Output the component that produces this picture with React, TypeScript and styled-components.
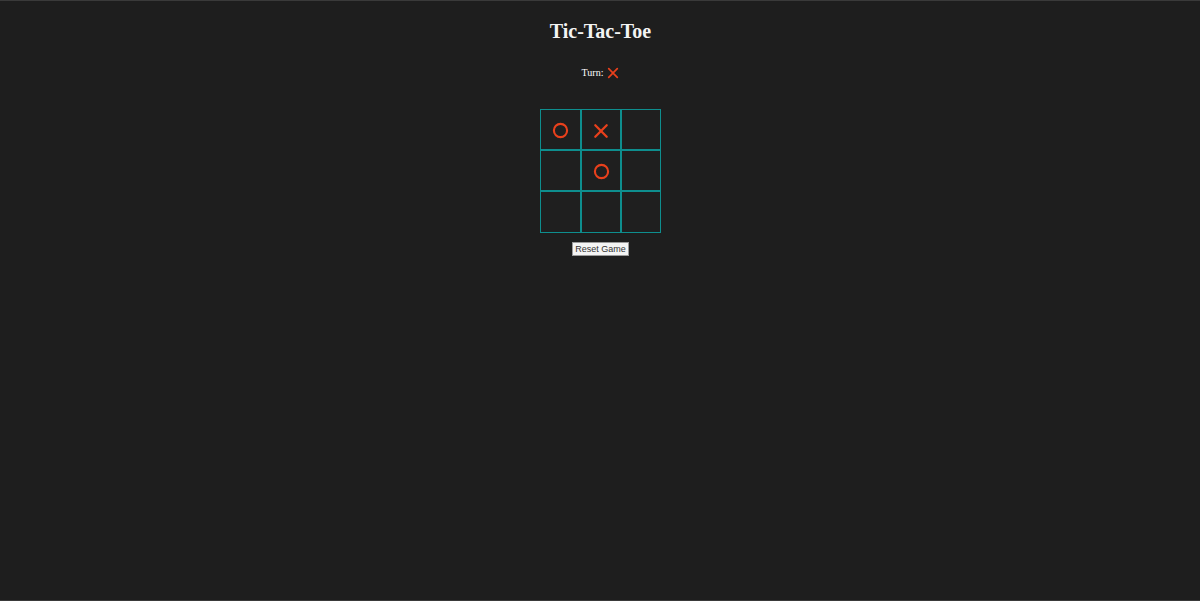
import React, { useState } from "react";
import styled, { createGlobalStyle } from "styled-components";

const Global = createGlobalStyle`
  html, body { margin: 0; padding: 0; background: #1e1e1e; height: 100%; }
  body { font-family: "Liberation Serif", "Times New Roman", serif; color: #f2f2f2; }
`;

const Page = styled.div`
  height: 601px;
  box-sizing: border-box;
  border-top: 1px solid #3a3a3a;
  border-bottom: 1px solid #3a3a3a;
  display: flex;
  flex-direction: column;
  align-items: center;
  padding-top: 19px;
  padding-left: 1px;
`;

const Title = styled.h1`
  margin: 0;
  font-size: 20px;
  line-height: 22px;
  font-weight: bold;
  color: #f4f4f4;
`;

const TurnRow = styled.div`
  margin-top: 25px;
  display: flex;
  align-items: center;
  gap: 4px;
  font-size: 10px;
  line-height: 12px;
  color: #ffffff;
`;

const LINE = "#0e8e8e";

const Board = styled.div`
  margin-top: 30px;
  display: grid;
  grid-template-columns: 41px 40px 40px;
  grid-template-rows: 41px 41px 42px;
`;

const Cell = styled.div`
  box-sizing: border-box;
  background: #1f1f1f;
  display: flex;
  align-items: center;
  justify-content: center;
  padding-top: 2px;
  border: 1px solid ${LINE};
`;

const ResetButton = styled.button`
  margin-top: 9px;
  font-family: "Liberation Sans", Arial, sans-serif;
  font-size: 9px;
  line-height: 11px;
  padding: 1px 2px 0;
  background: #f4f4f4;
  color: #333;
  border: 1px solid #9a9a9a;
  border-radius: 0;
  cursor: pointer;
`;

const RED = "#e8401c";

const XMark = ({ size }: { size: number }) => (
  <svg width={size} height={size} viewBox="0 0 14 14">
    <path d="M2 2 L12 12 M12 2 L2 12" stroke={RED} strokeWidth={2} strokeLinecap="round" fill="none" />
  </svg>
);

const OMark = ({ size }: { size: number }) => (
  <svg width={size} height={size} viewBox="0 0 16 16">
    <circle cx={8} cy={8} r={6.2} stroke={RED} strokeWidth={2} fill="none" />
  </svg>
);

export default function App() {
  const [cells, setCells] = useState<(string | null)[]>(["O", "X", null, null, "O", null, null, null, null]);
  const [turn, setTurn] = useState<"X" | "O">("X");

  const play = (i: number) => {
    if (cells[i]) return;
    const next = cells.slice();
    next[i] = turn;
    setCells(next);
    setTurn(turn === "X" ? "O" : "X");
  };

  return (
    <>
      <Global />
      <Page>
        <Title>Tic-Tac-Toe</Title>
        <TurnRow>
          <span>Turn:</span>
          {turn === "X" ? <XMark size={12} /> : <OMark size={12} />}
        </TurnRow>
        <Board>
          {cells.map((c, i) => (
            <Cell key={i} onClick={() => play(i)}>
              {c === "X" && <XMark size={16} />}
              {c === "O" && <OMark size={17} />}
            </Cell>
          ))}
        </Board>
        <ResetButton onClick={() => { setCells(Array(9).fill(null)); setTurn("X"); }}>Reset Game</ResetButton>
      </Page>
    </>
  );
}
